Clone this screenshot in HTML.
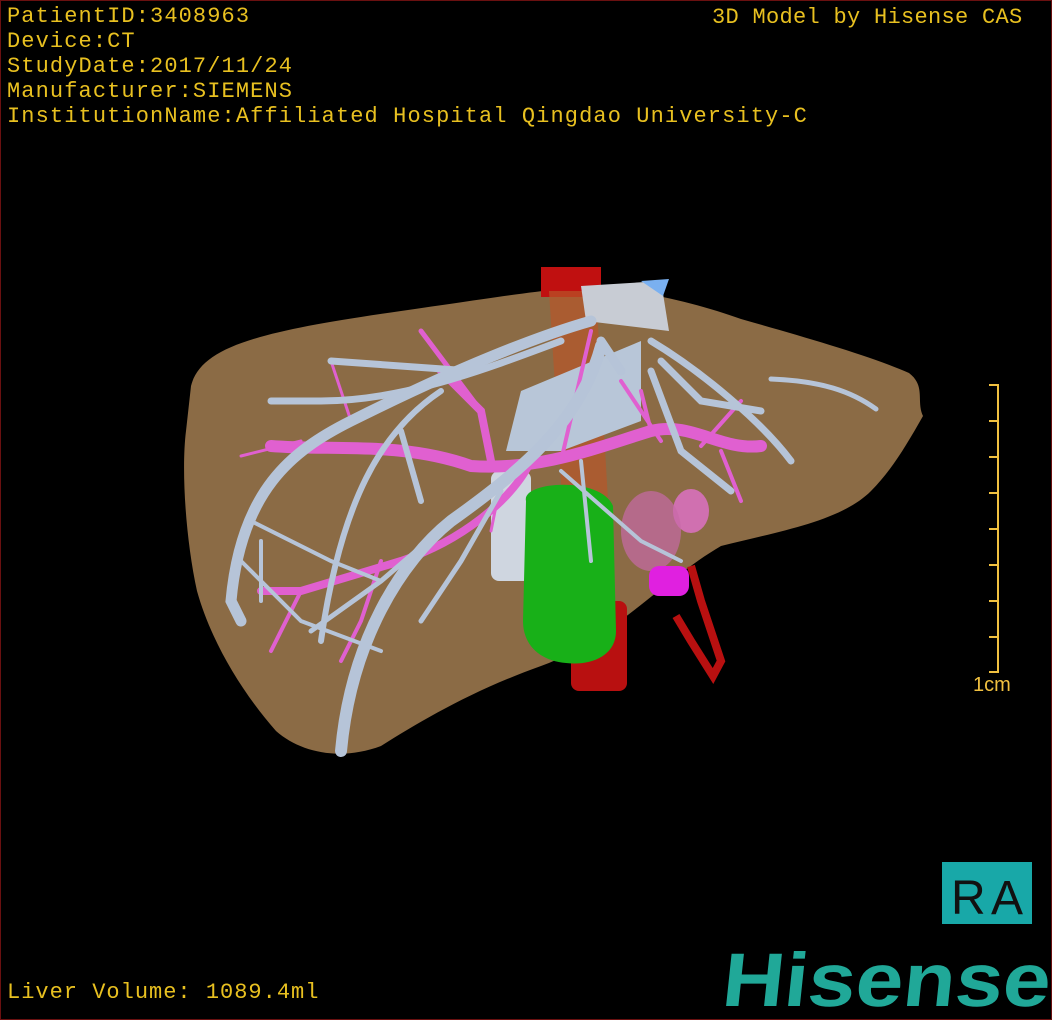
<!DOCTYPE html>
<html><head><meta charset="utf-8"><style>
html,body{margin:0;padding:0;background:#000;}
#f{position:relative;width:1052px;height:1020px;background:#000;overflow:hidden;box-sizing:border-box;border:1px solid #6a1010;}
.t{position:absolute;left:6px;color:#e8c020;font-family:"Liberation Mono","DejaVu Sans Mono",monospace;font-size:22px;line-height:25px;white-space:pre;letter-spacing:1.1px}
</style></head><body><div id="f">
<div class="t" style="top:3px">PatientID:3408963<br>Device:CT<br>StudyDate:2017/11/24<br>Manufacturer:SIEMENS<br>InstitutionName:Affiliated Hospital Qingdao University-C</div>
<div class="t" style="top:4px;left:711px;letter-spacing:0.3px">3D Model by Hisense CAS</div>
<div class="t" style="top:979px;letter-spacing:1px">Liver Volume: 1089.4ml</div>
<svg width="1052" height="1020" style="position:absolute;left:0;top:0">
<path d="M190,385 C200,345 260,330 400,310 C470,300 520,292 560,288 C620,283 690,300 740,318 C800,335 870,355 908,372 C925,385 915,400 922,415 C905,445 890,470 870,490 C840,520 780,530 720,545 C660,580 610,640 540,665 C470,690 420,720 380,745 C340,760 300,752 275,730 C240,690 210,640 196,590 C185,540 180,470 185,430 Z" fill="#8b6b45"/>
<rect x="540" y="266" width="60" height="30" fill="#c01010"/>
<path d="M548,290 L595,290 L615,640 L570,640 Z" fill="#b8552a" opacity="0.7"/>
<rect x="570" y="600" width="56" height="90" rx="8" fill="#b81010"/>
<path d="M690,565 L700,600 L720,660 L712,675 L690,640 L675,615" stroke="#b81010" stroke-width="8" fill="none"/>
<ellipse cx="690" cy="510" rx="18" ry="22" fill="#d070b0"/>
<ellipse cx="650" cy="530" rx="30" ry="40" fill="#c86aa8" opacity="0.7"/>
<rect x="648" y="565" width="40" height="30" rx="10" fill="#e020e0"/>
<rect x="490" y="470" width="40" height="110" rx="8" fill="#cfd6e0"/>
<path d="M525,500 C520,480 600,475 612,505 L615,630 C615,655 590,665 565,662 C540,660 522,645 522,620 Z" fill="#18b018"/>
<path d="M520,390 L640,340 L640,420 L560,450 L505,450 Z" fill="#b8c6d8"/>
<path d="M580,285 L660,280 L668,330 L585,320 Z" fill="#c8ccd4"/>
<path d="M640,280 L668,278 L662,295 Z" fill="#7ab0f0"/>
<g stroke="#e060d0" fill="none" stroke-linecap="round">
<path d="M270,445 C330,450 400,440 470,465 C540,470 600,445 650,430 C690,420 720,450 760,445" stroke-width="12"/>
<path d="M490,460 L480,410 L440,370" stroke-width="8"/>
<path d="M480,410 L420,330" stroke-width="5"/>
<path d="M530,460 C510,500 460,540 400,560 L300,590 L260,590" stroke-width="8"/>
<path d="M380,560 L360,620 L340,660" stroke-width="4"/>
<path d="M300,590 L270,650" stroke-width="4"/>
<path d="M560,460 L590,330" stroke-width="4"/>
<path d="M650,430 L640,390 M700,445 L740,400 M720,450 L740,500 M660,440 L620,380" stroke-width="4"/>
<path d="M330,360 L350,420 M240,455 L300,440 M500,480 L490,530" stroke-width="3"/>
</g>
<g stroke="#b6c4d8" fill="none" stroke-linecap="round">
<path d="M600,345 C580,420 520,470 450,520 C400,560 350,640 340,750" stroke-width="12"/>
<path d="M590,320 C520,340 430,380 350,420 C290,450 240,490 230,600 L240,620" stroke-width="11"/>
<path d="M560,340 C480,370 400,400 320,400 L270,400 M470,370 L330,360" stroke-width="7"/>
<path d="M440,390 C380,430 340,500 320,640 M400,430 L420,500" stroke-width="6"/>
<path d="M450,520 L380,580 L310,630 M500,490 L460,560 L420,620" stroke-width="5"/>
<path d="M250,520 L330,560 L380,580 M260,540 L260,600 M240,560 L300,620 L380,650" stroke-width="4"/>
<path d="M650,340 C700,370 760,420 790,460 M660,360 L700,400 L760,410 M650,370 L680,450 L730,490" stroke-width="7"/>
<path d="M770,378 C820,380 850,390 875,408" stroke-width="5"/>
<path d="M580,460 L590,560 M560,470 L640,540 L680,560" stroke-width="4"/>
<path d="M600,340 L620,370" stroke-width="9"/>
</g>
<g stroke="#f0c040" stroke-width="2">
<line x1="997" y1="383" x2="997" y2="672"/>
<line x1="988" y1="384" x2="997" y2="384"/><line x1="988" y1="420" x2="997" y2="420"/><line x1="988" y1="456" x2="997" y2="456"/><line x1="988" y1="492" x2="997" y2="492"/><line x1="988" y1="528" x2="997" y2="528"/><line x1="988" y1="564" x2="997" y2="564"/><line x1="988" y1="600" x2="997" y2="600"/><line x1="988" y1="636" x2="997" y2="636"/><line x1="988" y1="671" x2="997" y2="671"/>
</g>
<text x="972" y="690" fill="#f0c040" font-family="Liberation Sans,sans-serif" font-size="20">1cm</text>
<rect x="941" y="861" width="90" height="62" fill="#18a8a8"/>
<text x="986" y="913" fill="#111" font-family="Liberation Sans,sans-serif" font-size="48" text-anchor="middle" textLength="72" lengthAdjust="spacing">RA</text>
<text x="1048" y="1005" fill="#20a898" font-family="Liberation Sans,sans-serif" font-weight="bold" font-size="76" text-anchor="end" textLength="328" lengthAdjust="spacingAndGlyphs" transform="skewX(-6) translate(105,0)">Hisense</text>
</svg>
</div></body></html>
